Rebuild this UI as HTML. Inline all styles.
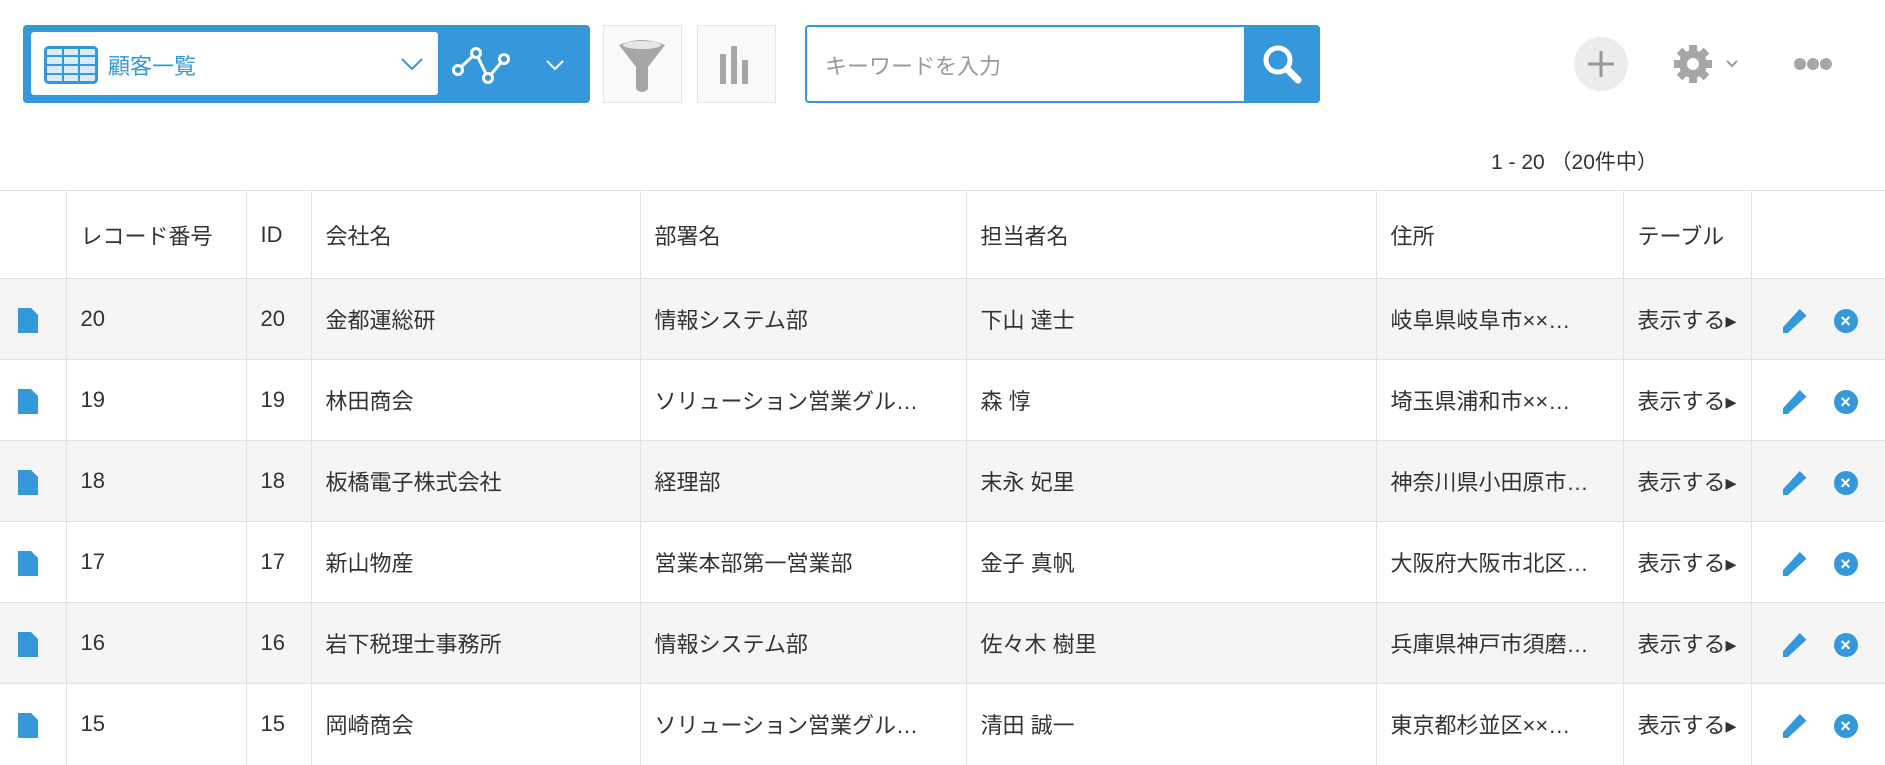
<!DOCTYPE html>
<html><head><meta charset="utf-8"><style>
*{box-sizing:border-box;margin:0;padding:0}
body{width:1885px;height:755px;background:#fff;font-family:"Liberation Sans","Noto Sans CJK JP",sans-serif;color:#333;position:relative;overflow:hidden}
.abs{position:absolute}
.bar{left:23px;top:25px;width:567px;height:78px;background:#3498db;border-radius:4px}
.sel{left:31px;top:32px;width:407px;height:63px;background:#fff;border-radius:3px}
.btn{top:25px;width:79px;height:78px;background:#f7f9fa;border:1px solid #e3e7e8}
.search{left:805px;top:25px;width:515px;height:78px;border:2px solid #3498db;border-radius:4px;background:#fff}
.sbtn{left:1244px;top:25px;width:76px;height:78px;background:#3498db;border-radius:0 4px 4px 0}
table{position:absolute;left:0;top:190px;border-collapse:collapse;width:1885px;table-layout:fixed}
td{height:81px;border-left:1px solid #e3e3e3;border-top:1px solid #e3e3e3;font-size:22px;padding:0 0 0 14px;white-space:nowrap;overflow:hidden}
tr.h td{height:88px}
tr.g td{background:#f5f5f5}
td:first-child{border-left:none}
</style></head><body>
<div class="abs bar"></div>
<div class="abs sel"></div>
<svg class="abs" style="left:44px;top:46px" width="54" height="38" viewBox="0 0 54 38"><rect x="1.5" y="1.5" width="51" height="35" rx="3" fill="#dbeaf7" stroke="#3498db" stroke-width="3"/><g stroke="#3498db" stroke-width="2"><line x1="2" y1="10" x2="52" y2="10"/><line x1="2" y1="19" x2="52" y2="19"/><line x1="2" y1="28" x2="52" y2="28"/><line x1="19" y1="2" x2="19" y2="36"/><line x1="35" y1="2" x2="35" y2="36"/></g></svg>
<div class="abs" style="left:108px;top:49px;font-size:22px;color:#3498db">顧客一覧</div>
<svg class="abs" style="left:400px;top:57px" width="24" height="14"><polyline points="2,2 12,12 22,2" fill="none" stroke="#3498db" stroke-width="2"/></svg>
<svg class="abs" style="left:452px;top:45px" width="70" height="40" viewBox="0 0 70 40"><polyline points="6,25 24,8 36,33 52,14" fill="none" stroke="#fff" stroke-width="3"/><g fill="#3498db" stroke="#fff" stroke-width="3"><circle cx="6" cy="25" r="4.5"/><circle cx="24" cy="8" r="4.5"/><circle cx="36" cy="33" r="4.5"/><circle cx="52" cy="14" r="4.5"/></g></svg>
<svg class="abs" style="left:545px;top:59px" width="20" height="12"><polyline points="2,2 10,10 18,2" fill="none" stroke="#fff" stroke-width="2"/></svg>
<div class="abs btn" style="left:603px"></div>
<svg class="abs" style="left:617px;top:37px" width="50" height="58" viewBox="0 0 50 58"><path d="M2 8 Q25 -2 48 8 L31 30 L31 52 Q25 58 19 52 L19 30 Z" fill="#a6a6a6"/><ellipse cx="25" cy="8" rx="19" ry="4" fill="#e6e6e6"/></svg>
<div class="abs btn" style="left:697px"></div>
<svg class="abs" style="left:720px;top:46px" width="34" height="38"><rect x="0" y="8" width="6" height="30" fill="#a6a6a6"/><rect x="11" y="0" width="6" height="38" fill="#a6a6a6"/><rect x="22" y="14" width="6" height="24" fill="#a6a6a6"/></svg>
<div class="abs search"></div>
<div class="abs" style="left:825px;top:49px;font-size:22px;color:#999">キーワードを入力</div>
<div class="abs sbtn"></div>
<svg class="abs" style="left:1260px;top:42px" width="44" height="44" viewBox="0 0 44 44"><circle cx="18" cy="18" r="12" fill="none" stroke="#fff" stroke-width="5"/><line x1="27" y1="27" x2="38" y2="38" stroke="#fff" stroke-width="7" stroke-linecap="round"/></svg>
<div class="abs" style="left:1574px;top:37px;width:54px;height:54px;border-radius:50%;background:#ececec"></div>
<svg class="abs" style="left:1587px;top:50px" width="28" height="28"><line x1="14" y1="1" x2="14" y2="27" stroke="#999" stroke-width="3"/><line x1="1" y1="14" x2="27" y2="14" stroke="#999" stroke-width="3"/></svg>
<svg class="abs" style="left:1673px;top:44px" width="40" height="40" viewBox="0 0 40 40"><g fill="#a6a6a6"><circle cx="20" cy="20" r="14"/><rect x="16" y="1" width="8" height="38"/><rect x="1" y="16" width="38" height="8"/><rect x="16" y="1" width="8" height="38" transform="rotate(45 20 20)"/><rect x="16" y="1" width="8" height="38" transform="rotate(-45 20 20)"/></g><circle cx="20" cy="20" r="6" fill="#fff"/></svg>
<svg class="abs" style="left:1725px;top:59px" width="14" height="10"><polyline points="2,2 7,7 12,2" fill="none" stroke="#999" stroke-width="2"/></svg>
<svg class="abs" style="left:1793px;top:56px" width="40" height="16"><g fill="#a6a6a6"><circle cx="7" cy="8" r="6"/><circle cx="20" cy="8" r="6"/><circle cx="33" cy="8" r="6"/></g></svg>
<div class="abs" style="left:1491px;top:146px;font-size:21px;color:#333">1 - 20 （20件中）</div>
<table>
<colgroup><col style="width:66px"><col style="width:180px"><col style="width:65px"><col style="width:329px"><col style="width:326px"><col style="width:410px"><col style="width:247px"><col style="width:128px"><col style="width:134px"></colgroup>
<tr class="h"><td></td><td>レコード番号</td><td>ID</td><td>会社名</td><td>部署名</td><td>担当者名</td><td>住所</td><td>テーブル</td><td></td></tr>
<tr class="g"><td>§</td><td>20</td><td>20</td><td>金都運総研</td><td>情報システム部</td><td>下山 達士</td><td>岐阜県岐阜市××…</td><td>表示する▸</td><td>✎</td></tr>
<tr><td>§</td><td>19</td><td>19</td><td>林田商会</td><td>ソリューション営業グル…</td><td>森 惇</td><td>埼玉県浦和市××…</td><td>表示する▸</td><td>✎</td></tr>
<tr class="g"><td>§</td><td>18</td><td>18</td><td>板橋電子株式会社</td><td>経理部</td><td>末永 妃里</td><td>神奈川県小田原市…</td><td>表示する▸</td><td>✎</td></tr>
<tr><td>§</td><td>17</td><td>17</td><td>新山物産</td><td>営業本部第一営業部</td><td>金子 真帆</td><td>大阪府大阪市北区…</td><td>表示する▸</td><td>✎</td></tr>
<tr class="g"><td>§</td><td>16</td><td>16</td><td>岩下税理士事務所</td><td>情報システム部</td><td>佐々木 樹里</td><td>兵庫県神戸市須磨…</td><td>表示する▸</td><td>✎</td></tr>
<tr><td>§</td><td>15</td><td>15</td><td>岡崎商会</td><td>ソリューション営業グル…</td><td>清田 誠一</td><td>東京都杉並区××…</td><td>表示する▸</td><td>✎</td></tr>
</table>
<style>
td:first-child,td:last-child{font-size:0;position:relative}
tr:not(.h) td:first-child::after{content:"";position:absolute;left:18px;top:29px;width:20px;height:25px;background:#3498db;clip-path:polygon(0 0,65% 0,100% 28%,100% 100%,0 100%)}
tr:not(.h) td:last-child::before{content:"";position:absolute;left:31px;top:30px;width:24px;height:24px;background:#3498db;clip-path:polygon(72% 0,100% 28%,22% 100%,0 100%,0 78%)}
tr:not(.h) td:last-child::after{content:"×";font-size:18px;font-weight:bold;color:#fff;text-align:center;line-height:24px;position:absolute;left:82px;top:30px;width:24px;height:24px;border-radius:50%;background:#3498db}
td:nth-child(8){font-size:22px}
</style>
</body></html>
